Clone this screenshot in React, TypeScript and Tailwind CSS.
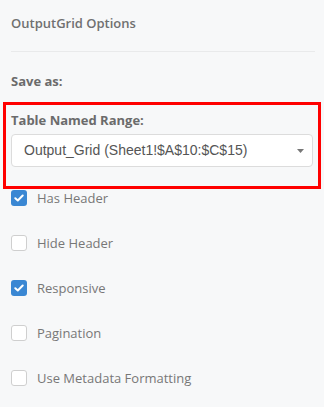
import React from "react";

function Check({ checked }: { checked: boolean }) {
  if (checked) {
    return (
      <div className="w-[16px] h-[16px] rounded-[3px] bg-[#3a87d3] flex items-center justify-center shrink-0">
        <svg width="10" height="8" viewBox="0 0 10 8" fill="none">
          <path d="M1.3 4.2 L3.8 6.5 L8.7 1.5" stroke="white" strokeWidth="2" strokeLinecap="round" strokeLinejoin="round" />
        </svg>
      </div>
    );
  }
  return <div className="w-[16px] h-[16px] rounded-[3px] bg-white border border-[#cfcfcf] shrink-0" />;
}

const items: [string, boolean][] = [
  ["Has Header", true],
  ["Hide Header", false],
  ["Responsive", true],
  ["Pagination", false],
  ["Use Metadata Formatting", false],
];

export default function App() {
  return (
    <div
      className="w-[324px] h-[407px] bg-[#f7f8f9] px-[11px] overflow-hidden"
      style={{ fontFamily: '"Open Sans", "Noto Sans", sans-serif' }}
    >
      <div className="pt-[14px] h-[31px] text-[13px] leading-[18px] font-semibold text-[#707070]">OutputGrid Options</div>
      <div className="mt-[20px] h-px bg-[#e9eaeb] mr-[-2px]" />
      <div className="mt-[20px] text-[13px] leading-[18px] font-bold text-[#6b6b6b]">Save as:</div>
      <div className="mt-[12px] mx-[-8px] border-[3px] border-[#ff0000] px-[5px] pt-[6px] pb-[19px]">
        <div className="text-[13px] leading-[18px] font-bold text-[#6b6b6b]">Table Named Range:</div>
        <div className="mt-[5px] h-[33px] bg-white border border-[#dcdcdc] rounded-[4px] flex items-center justify-between pl-[12px] pr-[8px]">
          <span
            className="text-[14px] text-[#555555]"
            style={{ fontFamily: '"Liberation Sans", Arial, sans-serif' }}
          >
            Output_Grid (Sheet1!$A$10:$C$15)
          </span>
          <svg width="7" height="4" viewBox="0 0 7 4">
            <path d="M0 0 L7 0 L3.5 4 Z" fill="#777" />
          </svg>
        </div>
      </div>
      <div className="mt-[1px] flex flex-col gap-[29px]">
        {items.map(([label, checked]) => (
          <div key={label} className="flex items-center h-[16px]">
            <Check checked={checked} />
            <span className="ml-[10px] text-[13px] text-[#777777] leading-[18px]">{label}</span>
          </div>
        ))}
      </div>
    </div>
  );
}
